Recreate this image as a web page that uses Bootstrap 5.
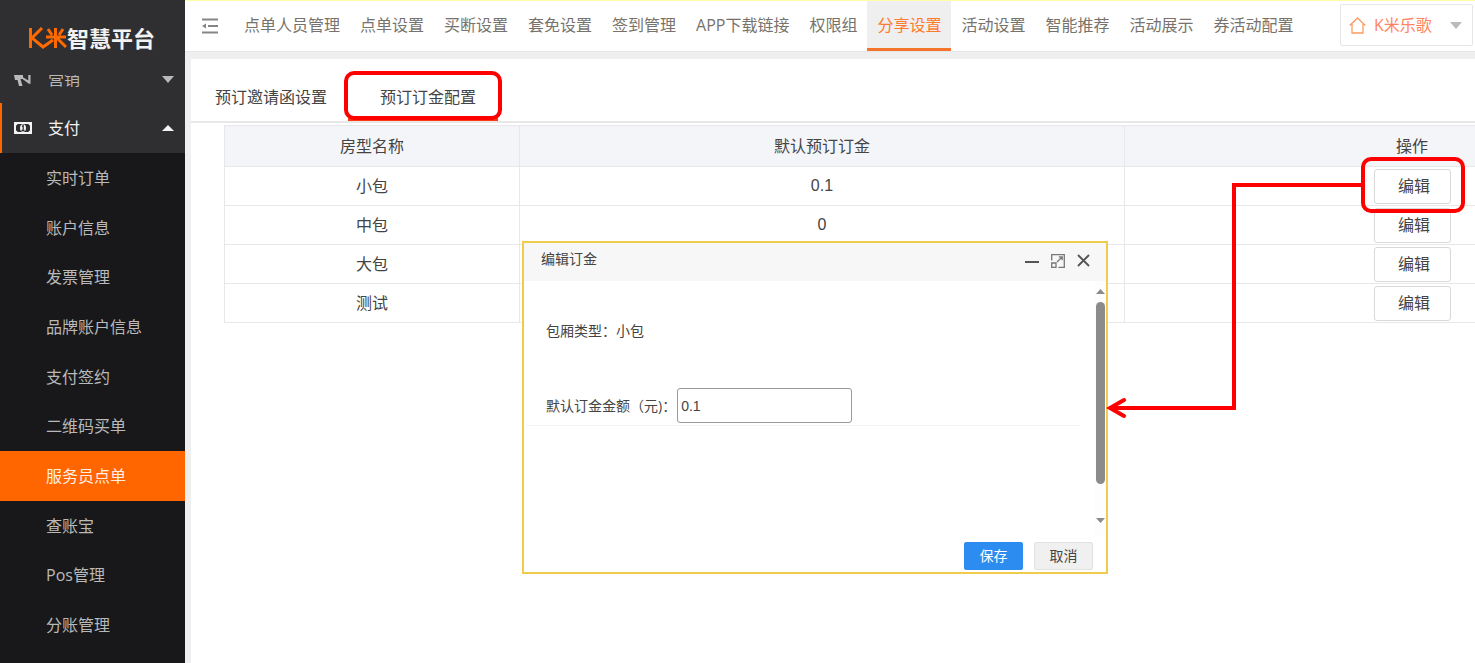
<!DOCTYPE html>
<html lang="zh-CN">
<head>
<meta charset="utf-8">
<meta name="viewport" content="width=device-width, initial-scale=1">
<title>K米智慧平台</title>
<link href="https://cdn.jsdelivr.net/npm/bootstrap@5.3.0/dist/css/bootstrap.min.css" rel="stylesheet">
<style>
  body { font-family: "Open Sans", "Noto Sans CJK SC", sans-serif; font-size: 16px; line-height: 24px; color: #444; background: #fff; }
  a { text-decoration: none; }
  .sidebar { width: 185px; flex: none; background: #18181a; color: #b9b9b9; }
  .brand { height: 75px; padding: 0 0 0 28px; background: #2f2f31; color: #f2f2f2; font-size: 22px; font-weight: 700; flex: none; position: relative; z-index: 2; }
  .menu-scroll { margin-top: -22px; min-height: 0; }
  .menu-head { height: 50px; flex: none; padding: 0 11px 0 14px; background: #2f2f31; color: #b9b9b9; }
  .menu-head.open { color: #f4f4f4; border-left: 2px solid #ff6600; padding-left: 12px; }
  .menu-head svg:first-child { margin-right: 16px; }
  .menu-head.cut { padding-top: 2px; }
  .submenu { padding-bottom: 13px; min-height: 0; }
  .submenu li { flex: 1 1 0; min-height: 24px; max-height: 50px; }
  .submenu a { padding-left: 46px; color: #b9b9b9; }
  .submenu a.current { background: #ff6600; color: #ffefe4; }
  .topbar { height: 52px; flex: none; padding-left: 16px; border-top: 1px solid #ffffaa; border-bottom: 1px solid #e6e6e6; background: #fff; }
  .topnav { margin-left: -1px; }
  .topnav a { padding: 0 10px; color: #77736c; white-space: nowrap; border-bottom: 3px solid transparent; }
  .topnav a.current { background: #efefef; color: #ff7a2e; border-color: #f5742c; }
  .account { width: 133px; height: 42px; margin: 3px 2px 0 0; padding: 0 10px 0 8px; border: 1px solid #e6e6e6; border-radius: 2px; background: #fff; color: #ff8560; white-space: nowrap; }
  .canvas { background: #efefef; padding: 7px 0 0 6px; }
  .panel { background: #fff; }
  .tabs { height: 64px; padding: 0 0 0 24px; border-bottom: 2px solid #e8e8e8; }
  .tabs a { color: #444; padding-top: 13px; }
  .tabs a.current { margin-left: 21px; padding: 16px 22px 0 32px; border-bottom: 3px solid #ff3a10; position: relative; }
  .callout::after { content: ""; position: absolute; border: 4px solid #f00; border-radius: 10px; pointer-events: none; }
  .tabs .callout::after { inset: 12px -4px -2px -4px; }
  .grid-wrap { margin: 2px 0 0 33px; overflow: hidden; }
  .rooms { width: 118%; table-layout: fixed; text-align: center; border-collapse: collapse; margin: 0; }
  .rooms th, .rooms td { border: 1px solid #e8e8e8; padding: 0; height: 39px; font-weight: 400; vertical-align: middle; }
  .rooms th { height: 41px; background: #f3f5f9; }
  .rooms td:nth-child(2) { font-family: "Liberation Sans", sans-serif; }
  .edit { width: 77px; height: 35px; padding: 0 0 0 4px; border: 1px solid #d9d9d9; border-radius: 3px; background: #fff; color: #444; position: relative; display: block; margin: 0 auto; }
  .edit.callout { z-index: 1; }
  .edit.callout::after { inset: -13px -15px -10px -14px; }
  .dialog-box { position: absolute; left: 331px; top: 182px; width: 586px; height: 333px; border: 2px solid #f0cc4c; background: #fff; font-size: 14px; line-height: 20px; z-index: 3; }
  .dialog-head { height: 38px; background: #f7f7f7; padding: 0 16px 3px 17px; }
  .dialog-head .btn { line-height: 0; padding: 0; border: 0; color: #555; }
  .dialog-main { padding: 40px 15px 0 2px; }
  .room-line { padding: 0 20px; margin-bottom: 47px; }
  .amount-line { padding: 0 20px 2px; border-bottom: 1px solid #f4f4f4; }
  .amount { width: 175px; height: 35px; border: 1px solid #999; border-radius: 3px; padding: 0 3px; color: #444; font: 14px "Liberation Sans", sans-serif; margin-left: 1px; }
  .scroller { width: 11px; padding: 8px 1px 0; background: #fdfdfd; flex: none; }
  .scroller i { width: 9px; height: 182px; border-radius: 5px; background: #8b8b8b; margin: 8px 0 34px; }
  .dialog-foot { height: 36px; padding: 6px 13px 0 0; gap: 11px; }
  .dialog-foot .btn { width: 59px; height: 28px; padding: 0; font-size: 14px; line-height: 20px; border-radius: 2px; }
  .save { background: #2d8cf0; color: #fff; border-color: #2d8cf0; }
  .cancel { background: #f0f0f0; color: #444; border-color: #e2e2e2; }
  .pointer { position: absolute; left: 582px; top: -64px; pointer-events: none; }
</style>
</head>
<body>
<div class="d-flex vh-100 overflow-hidden">
  <aside class="sidebar d-flex flex-column">
    <div class="brand d-flex align-items-center">
      <svg class="flex-shrink-0 me-0" width="39" height="22" viewBox="0 0 39 22" fill="none" stroke="#ff6a00" stroke-width="3" aria-label="K米" role="img">
        <path d="M2.500 1V21M14 1L4 11L15 20L25 13M18 10H38M27.500 1V21M20 2L24 8M35 2L31 8M29 11L38 20"/>
      </svg>
      <span>智慧平台</span>
    </div>
    <nav class="menu-scroll d-flex flex-column flex-fill">
      <a href="#" class="menu-head cut d-flex align-items-center">
        <svg class="mt-1" width="18" height="12" viewBox="0 0 18 12" fill="currentColor"><path d="M0 0H9V4H6.500L8.500 11H5L3.500 5H1Z"/><path d="M8.500 2L14.300 5.500V0H16.500V9L14.500 8.500L8.500 4Z"/></svg>
        <span class="flex-fill">营销</span>
        <svg width="12" height="7" viewBox="0 0 12 7" fill="currentColor"><path d="M0 0H12L6 7Z"/></svg>
      </a>
      <a href="#" class="menu-head open d-flex align-items-center">
        <svg width="18" height="12" viewBox="0 0 18 12" fill="none" stroke="currentColor"><path stroke-width="2" d="M1 1H17V11H1Z"/><path fill="currentColor" stroke="none" d="M1 1H4Q3.500 3.500 1 4ZM17 1H14Q14.500 3.500 17 4ZM1 11H4Q3.500 8.500 1 8ZM17 11H14Q14.500 8.500 17 8Z"/><ellipse cx="9" cy="6" rx="3" ry="3.800" fill="currentColor" stroke="none"/><path stroke="#2f2f31" stroke-width="1.200" d="M8 4.500L9.200 3.500V8M7.500 8.300H10.500"/></svg>
        <span class="flex-fill">支付</span>
        <svg width="12" height="6" viewBox="0 0 12 6" fill="currentColor"><path d="M0 6H12L6 0Z"/></svg>
      </a>
      <ul class="submenu list-unstyled d-flex flex-column flex-fill mb-0">
        <li><a href="#" class="d-flex align-items-center h-100">实时订单</a></li>
        <li><a href="#" class="d-flex align-items-center h-100">账户信息</a></li>
        <li><a href="#" class="d-flex align-items-center h-100">发票管理</a></li>
        <li><a href="#" class="d-flex align-items-center h-100">品牌账户信息</a></li>
        <li><a href="#" class="d-flex align-items-center h-100">支付签约</a></li>
        <li><a href="#" class="d-flex align-items-center h-100">二维码买单</a></li>
        <li><a href="#" class="current d-flex align-items-center h-100">服务员点单</a></li>
        <li><a href="#" class="d-flex align-items-center h-100">查账宝</a></li>
        <li><a href="#" class="d-flex align-items-center h-100">Pos管理</a></li>
        <li><a href="#" class="d-flex align-items-center h-100">分账管理</a></li>
      </ul>
    </nav>
  </aside>

  <div class="d-flex flex-column flex-fill overflow-hidden">
    <header class="topbar d-flex">
      <button class="btn border-0 p-0 me-3 align-self-center" type="button" aria-label="收起菜单">
        <svg class="d-block" width="18" height="16" viewBox="0 0 18 16" fill="none" stroke="#858585" stroke-width="2"><path d="M1 1.500H17M7 8H17M1 14.500H17"/><path d="M1 8L5 5.500V10.500Z" fill="#858585" stroke="none"/></svg>
      </button>
      <nav class="topnav d-flex flex-fill">
        <a href="#" class="d-flex align-items-center">点单人员管理</a>
        <a href="#" class="d-flex align-items-center">点单设置</a>
        <a href="#" class="d-flex align-items-center">买断设置</a>
        <a href="#" class="d-flex align-items-center">套免设置</a>
        <a href="#" class="d-flex align-items-center">签到管理</a>
        <a href="#" class="d-flex align-items-center">APP下载链接</a>
        <a href="#" class="d-flex align-items-center">权限组</a>
        <a href="#" class="current d-flex align-items-center">分享设置</a>
        <a href="#" class="d-flex align-items-center">活动设置</a>
        <a href="#" class="d-flex align-items-center">智能推荐</a>
        <a href="#" class="d-flex align-items-center">活动展示</a>
        <a href="#" class="d-flex align-items-center">券活动配置</a>
      </nav>
      <button class="account d-flex align-items-center flex-shrink-0" type="button">
        <svg class="me-2" width="17" height="17" viewBox="0 0 17 17" fill="none" stroke="#ff9a62" stroke-width="1.300"><path d="M.700 8.500L8.500 1L16.300 8.500M3 7V16H14V7"/></svg>
        <span class="flex-fill text-start">K米乐歌</span>
        <svg width="12" height="7" viewBox="0 0 12 7" fill="#bbb"><path d="M0 0H12L6 7Z"/></svg>
      </button>
    </header>

    <main class="canvas flex-fill d-flex">
      <section class="panel flex-fill position-relative w-100">
        <nav class="tabs d-flex">
          <a href="#" class="d-flex align-items-center">预订邀请函设置</a>
          <a href="#" class="current callout d-flex align-items-center">预订订金配置</a>
        </nav>
        <div class="grid-wrap">
          <table class="rooms">
            <colgroup><col style="width:20%"><col style="width:41%"><col style="width:39%"></colgroup>
            <thead><tr><th>房型名称</th><th>默认预订订金</th><th>操作</th></tr></thead>
            <tbody>
              <tr><td>小包</td><td>0.1</td><td><button type="button" class="edit callout">编辑</button></td></tr>
              <tr><td>中包</td><td>0</td><td><button type="button" class="edit">编辑</button></td></tr>
              <tr><td>大包</td><td>0</td><td><button type="button" class="edit">编辑</button></td></tr>
              <tr><td>测试</td><td>0</td><td><button type="button" class="edit">编辑</button></td></tr>
            </tbody>
          </table>
        </div>

        <form class="dialog-box d-flex flex-column" role="dialog" aria-label="编辑订金">
          <div class="dialog-head d-flex align-items-center flex-shrink-0">
            <span class="flex-fill pb-1">编辑订金</span>
            <button type="button" class="btn" aria-label="最小化"><svg width="14" height="14" viewBox="0 0 14 14" stroke="currentColor" stroke-width="2"><path d="M0 8H14"/></svg></button>
            <button type="button" class="btn ms-2 me-2 px-1" aria-label="最大化"><svg width="14" height="14" viewBox="0 0 14 14" fill="none" stroke="#777" stroke-width="1.300"><path d="M.700 6.500V.700H13.300V13.300H7.500M.700 9H5V13.300H.700ZM6 8L11 3M7.800 2.800H11.200V6.200"/></svg></button>
            <button type="button" class="btn" aria-label="关闭"><svg width="13" height="13" viewBox="0 0 13 13" stroke="currentColor" stroke-width="1.800"><path d="M1 1L12 12M12 1L1 12"/></svg></button>
          </div>
          <div class="d-flex flex-fill">
            <div class="dialog-main flex-fill">
              <div class="room-line">包厢类型：小包</div>
              <div class="amount-line d-flex align-items-center">
                <label for="amount">默认订金金额（元)：</label>
                <input id="amount" class="amount" type="text" value="0.1">
              </div>
            </div>
            <div class="scroller d-flex flex-column align-items-center" aria-hidden="true">
              <svg width="9" height="5" viewBox="0 0 9 5" fill="#8b8b8b"><path d="M0 5H9L4.500 0Z"/></svg>
              <i></i>
              <svg width="9" height="5" viewBox="0 0 9 5" fill="#8b8b8b"><path d="M0 0H9L4.500 5Z"/></svg>
            </div>
          </div>
          <div class="dialog-foot d-flex justify-content-end flex-shrink-0">
            <button type="submit" class="btn save">保存</button>
            <button type="button" class="btn cancel">取消</button>
          </div>
          <svg class="pointer" width="256" height="242" viewBox="0 0 256 242" fill="none" stroke="#f00" stroke-width="4"><path d="M256 6H128V229H4"/><path d="M18 221L4 229L18 237" stroke-linecap="round"/></svg>
        </form>
      </section>
    </main>
  </div>
</div>
<script src="https://cdn.jsdelivr.net/npm/bootstrap@5.3.0/dist/js/bootstrap.bundle.min.js"></script>
</body>
</html>
